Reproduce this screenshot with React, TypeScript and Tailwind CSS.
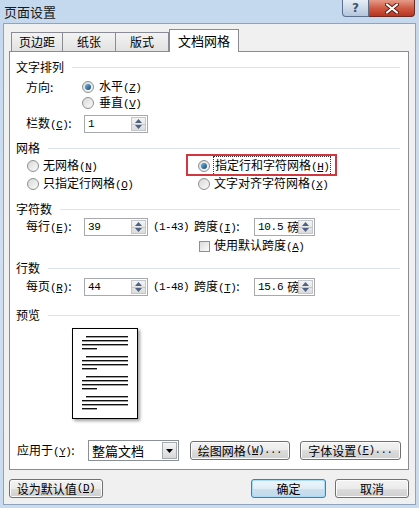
import React from 'react';

const Radio = ({ checked }: { checked?: boolean }) => (
  <span className="w-[12px] h-[12px] rounded-full border border-[#8e8f8f] bg-linear-to-br from-[#d8d8d8] to-[#fbfbfb] flex items-center justify-center shrink-0">
    {checked && <span className="w-[6px] h-[6px] rounded-full bg-linear-to-br from-[#6fb6e6] to-[#164a74]" />}
  </span>
);

const SpinBox = ({ value, unit, width }: { value: string; unit?: string; width: string }) => (
  <div className={`${width} h-[18px] flex border border-[#a6a9b0] bg-white`}>
    <span className="flex-1 flex items-center pl-[3px] whitespace-nowrap overflow-hidden">
      <span className="text-[11px] tracking-[-0.3px] font-['Liberation_Mono',monospace]">{value}</span>
      {unit && <span className="ml-[4px] text-[12px]">{unit}</span>}
    </span>
    <span className="w-[15px] my-px mr-px flex flex-col border border-[#c3c6cc] bg-linear-to-b from-[#f4f4f4] to-[#dcdcdc]">
      <span className="flex-1 flex items-center justify-center border-b border-[#c3c6cc]">
        <svg width="7" height="4" viewBox="0 0 7 4"><path d="M0 4 L3.5 0 L7 4 Z" fill="#4d6185" /></svg>
      </span>
      <span className="flex-1 flex items-center justify-center">
        <svg width="7" height="4" viewBox="0 0 7 4"><path d="M0 0 L3.5 4 L7 0 Z" fill="#4d6185" /></svg>
      </span>
    </span>
  </div>
);

const Heading = ({ text, className }: { text: string; className: string }) => (
  <div className={`flex items-center h-[16px] pl-[6px] pr-[8px] ${className}`}>
    <span>{text}</span>
    <span className="flex-1 h-px bg-[#dde3e8] ml-[8px]" />
  </div>
);

const Key = ({ k }: { k: string }) => (
  <span className="text-[11px] tracking-[-0.5px] font-['Liberation_Mono',monospace]">(<u>{k}</u>)</span>
);

const buttonFace =
  "border border-[#707070] rounded-[3px] bg-[linear-gradient(#f3f3f3_0%,#ebebeb_50%,#dddddd_50%,#cfcfcf_100%)] shadow-[inset_0_0_0_1px_#fcfcfc] flex items-center justify-center whitespace-nowrap";

const PreviewPage = () => {
  const groups = [8, 28, 48, 68];
  return (
    <div className="w-[66px] h-[91px] bg-white border border-black shadow-[2px_2px_3px_#a0a0a0]">
      <svg width="64" height="89" viewBox="0 0 64 89">
        {groups.map((g) => (
          <g key={g} fill="#111">
            <rect x="13" y={g - 1} width="42" height="1.4" />
            <rect x="9" y={g + 3} width="46" height="1.4" />
            <rect x="9" y={g + 7} width="46" height="1.4" />
            <rect x="9" y={g + 11} width="15" height="1.4" />
          </g>
        ))}
      </svg>
    </div>
  );
};

export default function App() {
  return (
    <div className="w-[419px] h-[508px] flex flex-col px-[3px] pb-[3px] bg-linear-to-b from-[#c4d8ee] via-[#cfdff1] to-[#c9dbee] font-['Noto_Sans_CJK_SC',sans-serif] text-[12px] text-black leading-none">
      {/* title bar */}
      <div className="h-[23px] flex items-start justify-between">
        <span className="pt-[5px] pl-[1px] text-[13px] text-[#1a1a1a]">页面设置</span>
        <div className="flex mr-[1px]">
          <span className="w-[27px] h-[17px] rounded-bl-[4px] border border-t-0 border-[#5a6f8c] bg-linear-to-b from-[#e8eef6] to-[#b4c5da] flex items-center justify-center text-[12px] font-bold text-[#3f5470] font-['DejaVu_Sans',sans-serif]">?</span>
          <span className="w-[46px] h-[17px] rounded-br-[4px] border border-t-0 border-l-0 border-[#6b2a22] bg-linear-to-b from-[#e59b88] via-[#cf5c45] to-[#b8341d] flex items-center justify-center">
            <svg width="14" height="11" viewBox="0 0 14 11">
              <path d="M2 1.5 L12 9.5 M12 1.5 L2 9.5" stroke="#5a1a10" strokeWidth="4" strokeLinecap="round" />
              <path d="M2 1.5 L12 9.5 M12 1.5 L2 9.5" stroke="#ffffff" strokeWidth="2.2" strokeLinecap="round" />
            </svg>
          </span>
        </div>
      </div>

      {/* body */}
      <div className="flex-1 bg-[#f0f0f0] border border-[#8fa3bd] flex flex-col pl-[5px] pt-[5px]">
        {/* tabs */}
        <div className="h-[23px] flex items-end pl-[2px] -mb-px relative z-10">
          <span className="w-[52px] h-[20px] border border-[#898c95] bg-linear-to-b from-[#f3f3f3] to-[#e2e2e2] flex items-center justify-center">页边距</span>
          <span className="w-[53px] h-[20px] border border-l-0 border-[#898c95] bg-linear-to-b from-[#f3f3f3] to-[#e2e2e2] flex items-center justify-center">纸张</span>
          <span className="w-[53px] h-[20px] border border-l-0 border-[#898c95] bg-linear-to-b from-[#f3f3f3] to-[#e2e2e2] flex items-center justify-center">版式</span>
          <span className="w-[70px] h-[23px] border border-b-0 border-[#898c95] bg-white flex items-center justify-center text-[13px] pb-[1px]">文档网格</span>
        </div>

        {/* panel */}
        <div className="w-[400px] h-[419px] border border-[#898c95] bg-white flex flex-col">
          <Heading text="文字排列" className="mt-[7px]" />
          <div className="mt-[4px] h-[16px] flex items-center pl-[16px]">
            <span className="w-[56px]">方向:</span>
            <Radio checked />
            <span className="ml-[5px]">水平<Key k="Z" /></span>
          </div>
          <div className="mt-[1px] h-[14px] flex items-center pl-[72px]">
            <Radio />
            <span className="ml-[5px]">垂直<Key k="V" /></span>
          </div>
          <div className="mt-[5px] h-[18px] flex items-center pl-[16px]">
            <span className="w-[58px]">栏数<Key k="C" />:</span>
            <SpinBox value="1" width="w-[64px]" />
          </div>

          <Heading text="网格" className="mt-[7px]" />
          <div className="mt-[1px] h-[18px] flex items-center pl-[17px]">
            <span className="w-[171px] flex items-center">
              <Radio />
              <span className="ml-[4px]">无网格<Key k="N" /></span>
            </span>
            <span className="relative flex items-center">
              <span className="absolute left-[-12px] top-[-2px] w-[151px] h-[22px] border-2 border-[#d0373f]" />
              <Radio checked />
              <span className="ml-[3px] px-[1px] py-[2px] border border-dotted border-[#333]">指定行和字符网格<Key k="H" /></span>
            </span>
          </div>
          <div className="h-[18px] flex items-center pl-[17px]">
            <span className="w-[171px] flex items-center">
              <Radio />
              <span className="ml-[4px]">只指定行网格<Key k="O" /></span>
            </span>
            <Radio />
            <span className="ml-[4px]">文字对齐字符网格<Key k="X" /></span>
          </div>

          <Heading text="字符数" className="mt-[8px]" />
          <div className="mt-[1px] h-[18px] flex items-center pl-[16px]">
            <span className="w-[58px]">每行<Key k="E" />:</span>
            <SpinBox value="39" width="w-[64px]" />
            <span className="ml-[5px] w-[41px] text-[11px] tracking-[-0.6px] font-['Liberation_Mono',monospace]">(1-43)</span>
            <span className="w-[60px]">跨度<Key k="I" />:</span>
            <SpinBox value="10.5" unit="磅" width="w-[61px]" />
          </div>
          <div className="mt-[3px] h-[14px] flex items-center pl-[189px]">
            <span className="w-[11px] h-[11px] border border-[#8e8f8f] bg-linear-to-br from-[#dcdcdc] to-[#fbfbfb]" />
            <span className="ml-[4px]">使用默认跨度<Key k="A" /></span>
          </div>

          <Heading text="行数" className="mt-[7px]" />
          <div className="mt-[2px] h-[18px] flex items-center pl-[16px]">
            <span className="w-[58px]">每页<Key k="R" />:</span>
            <SpinBox value="44" width="w-[64px]" />
            <span className="ml-[5px] w-[41px] text-[11px] tracking-[-0.6px] font-['Liberation_Mono',monospace]">(1-48)</span>
            <span className="w-[60px]">跨度<Key k="T" />:</span>
            <SpinBox value="15.6" unit="磅" width="w-[61px]" />
          </div>

          <Heading text="预览" className="mt-[11px]" />
          <div className="mt-[5px] h-[91px] pl-[62px]">
            <PreviewPage />
          </div>

          <div className="mt-[21px] h-[21px] flex items-center pl-[7px]">
            <span className="w-[71px]">应用于<Key k="Y" />:</span>
            <div className="w-[91px] h-[21px] border border-[#8b8f96] bg-white flex">
              <span className="flex-1 flex items-center pl-[3px] text-[13px]">整篇文档</span>
              <span className="w-[15px] my-px mr-px border border-[#a5a9b0] bg-linear-to-b from-[#f4f4f4] to-[#d8d8d8] flex items-center justify-center">
                <svg width="7" height="4" viewBox="0 0 7 4"><path d="M0 0 L3.5 4 L7 0 Z" fill="#000" /></svg>
              </span>
            </div>
            <span className={`ml-[11px] w-[100px] h-[19px] ${buttonFace}`}>绘图网格<Key k="W" /><span className="text-[10px] font-['Liberation_Mono',monospace]">...</span></span>
            <span className={`ml-[10px] w-[101px] h-[19px] ${buttonFace}`}>字体设置<Key k="F" /><span className="text-[10px] font-['Liberation_Mono',monospace]">...</span></span>
          </div>
        </div>

        {/* bottom buttons */}
        <div className="mt-[9px] flex items-center pr-[6px]">
          <span className={`w-[94px] h-[19px] ${buttonFace}`}>设为默认值<Key k="D" /></span>
          <span className="ml-auto w-[75px] h-[19px] border border-[#3c7fb1] rounded-[3px] bg-[linear-gradient(#edf5fb_0%,#e1edf6_50%,#cde0ee_50%,#c2d8ea_100%)] shadow-[inset_0_0_0_1px_#a9dcf8] flex items-center justify-center">确定</span>
          <span className={`ml-[9px] w-[74px] h-[19px] ${buttonFace}`}>取消</span>
        </div>
      </div>
    </div>
  );
}
